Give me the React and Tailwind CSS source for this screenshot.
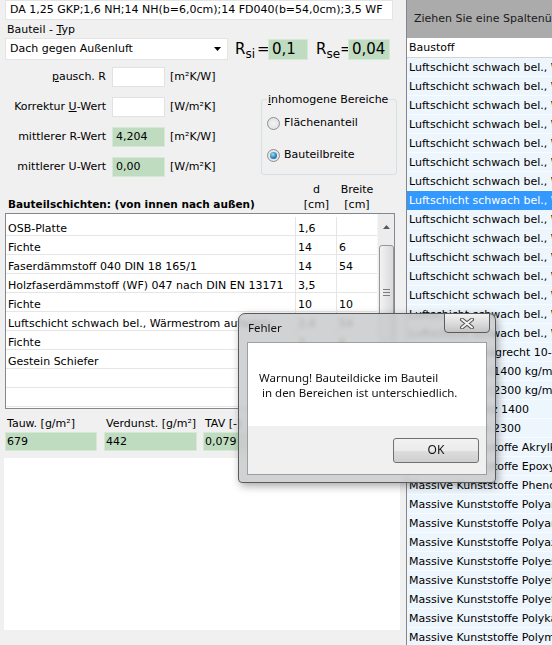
import React from "react";

const layers = [
  ["OSB-Platte", "1,6", ""],
  ["Fichte", "14", "6"],
  ["Faserdämmstoff 040 DIN 18 165/1", "14", "54"],
  ["Holzfaserdämmstoff (WF) 047 nach DIN EN 13171", "3,5", ""],
  ["Fichte", "10", "10"],
  ["Luftschicht schwach bel., Wärmestrom aufwärts", "2,4", "54"],
  ["Fichte", "3", "6"],
  ["Gestein Schiefer", "1", ""],
  ["", "", ""],
  ["", "", ""],
];

const materials = [
  "Luftschicht schwach bel., Wärmestrom abwärts 5 mm",
  "Luftschicht schwach bel., Wärmestrom abwärts 7 mm",
  "Luftschicht schwach bel., Wärmestrom abwärts 10 mm",
  "Luftschicht schwach bel., Wärmestrom abwärts 15 mm",
  "Luftschicht schwach bel., Wärmestrom abwärts 25 mm",
  "Luftschicht schwach bel., Wärmestrom abwärts 50 mm",
  "Luftschicht schwach bel., Wärmestrom abwärts 100 mm",
  "Luftschicht schwach bel., Wärmestrom aufwärts 5 mm",
  "Luftschicht schwach bel., Wärmestrom aufwärts 7 mm",
  "Luftschicht schwach bel., Wärmestrom aufwärts 10 mm",
  "Luftschicht schwach bel., Wärmestrom aufwärts 15 mm",
  "Luftschicht schwach bel., Wärmestrom aufwärts 25 mm",
  "Luftschicht schwach bel., Wärmestrom aufwärts 50 mm",
  "Luftschicht schwach bel., Wärmestrom horizontal",
  "Luftschicht schwach bel., Wärmestrom horizontal",
  "Luftschicht waagrecht 10-15 mm",
  "Kalksandstein (1400 kg/m³)",
  "Kalksandstein (2300 kg/m³)",
  "Kalkzementputz 1400",
  "Zementestrich 2300",
  "Massive Kunststoffe Akrylkunststoff",
  "Massive Kunststoffe Epoxydharze",
  "Massive Kunststoffe Phenolharze",
  "Massive Kunststoffe Polyamid",
  "Massive Kunststoffe Polyamid 6.6",
  "Massive Kunststoffe Polyazetatharz",
  "Massive Kunststoffe Polyester",
  "Massive Kunststoffe Polyethylen hoher Dichte",
  "Massive Kunststoffe Polyethylen niedriger Dichte",
  "Massive Kunststoffe Polykarbonat",
  "Massive Kunststoffe Polymethylmethacrylat",
];

function Radio({ checked }) {
  return (
    <span className="w-[13px] h-[13px] rounded-full border border-[#8e8f8f] bg-[radial-gradient(circle_at_50%_50%,#f4f4f4,#dcdcdc)] flex items-center justify-center shrink-0">
      {checked && (
        <span className="w-[7px] h-[7px] rounded-full bg-[radial-gradient(circle_at_40%_35%,#9fdcf8,#2a86bd_55%,#0f4d77)]" />
      )}
    </span>
  );
}

function ValueRow({ label, value, unit, green }) {
  return (
    <div className="flex items-center h-[20px]">
      <span className="w-[101px] text-right whitespace-nowrap">{label}</span>
      <div
        className={
          green
            ? "ml-[6px] w-[53px] h-[20px] bg-[#c0dcc0] border border-[#d6e8d6] pl-[3px] leading-[18px]"
            : "ml-[6px] w-[53px] h-[20px] bg-white border border-[#e2e2e2] pl-[3px] leading-[18px]"
        }
      >
        {value}
      </div>
      <span className="ml-[5px]">{unit}</span>
    </div>
  );
}

function LeftPanel() {
  return (
    <div className="w-[406px] shrink-0 flex flex-col pl-[5px]">
      <div className="w-[388px] h-[20px] bg-white border border-[#e4e4e4] pl-[4px] leading-[18px] whitespace-nowrap overflow-hidden">
        DA 1,25 GKP;1,6 NH;14 NH(b=6,0cm);14 FD040(b=54,0cm);3,5 WF
      </div>
      <div className="mt-[3px] leading-[14px] pl-[2px]">
        Bauteil - <u>T</u>yp
      </div>
      <div className="mt-[1px] flex items-center h-[22px]">
        <div className="w-[223px] h-[22px] bg-white border border-[#e4e4e4] flex items-center justify-between pl-[4px] pr-[6px]">
          <span>Dach gegen Außenluft</span>
          <svg width="7" height="4" viewBox="0 0 7 4">
            <path d="M0 0 L7 0 L3.5 4 Z" fill="#000" />
          </svg>
        </div>
        <div className="ml-[7px] w-[33px] flex items-baseline whitespace-nowrap">
          <span className="text-[15px]">R</span>
          <span className="text-[12px] relative top-[4px]">si</span>
          <span className="text-[15px] ml-[2px]">=</span>
        </div>
        <div className="w-[40px] h-[21px] bg-[#c0dcc0] border border-[#d6e8d6] pl-[3px] text-[15px] leading-[19px]">0,1</div>
        <div className="ml-[8px] w-[32px] flex items-baseline whitespace-nowrap">
          <span className="text-[15px]">R</span>
          <span className="text-[12px] relative top-[4px]">se</span>
          <span className="text-[15px]">=</span>
        </div>
        <div className="w-[42px] h-[21px] bg-[#c0dcc0] border border-[#d6e8d6] pl-[3px] text-[15px] leading-[19px]">0,04</div>
      </div>

      <div className="flex mt-[7px]">
        <div className="flex flex-col gap-[10px] w-[255px]">
          <ValueRow label={<><u>p</u>ausch. R</>} value="" unit="[m²K/W]" />
          <ValueRow label={<>Korrektur <u>U</u>-Wert</>} value="" unit="[W/m²K]" />
          <ValueRow label="mittlerer R-Wert" value="4,204" unit="[m²K/W]" green />
          <ValueRow label="mittlerer U-Wert" value="0,00" unit="[W/m²K]" green />
        </div>
        <fieldset className="ml-[1px] mt-[26px] w-[136px] h-[82px] border border-[#d5dfe5] rounded-[3px] px-[5px]">
          <legend className="px-[1px] leading-[13px]">
            <u>i</u>nhomogene Bereiche
          </legend>
          <div className="mt-[10px] h-[14px] flex items-center gap-[4px]">
            <Radio />
            <span>Flächenanteil</span>
          </div>
          <div className="mt-[18px] h-[14px] flex items-center gap-[4px]">
            <Radio checked />
            <span>Bauteilbreite</span>
          </div>
        </fieldset>
      </div>

      <div className="mt-[5px] h-[30px] flex items-end">
        <div className="w-[291px] pl-[3px] font-bold text-[10.5px] leading-[15px]">
          Bauteilschichten: (von innen nach außen)
        </div>
        <div className="w-[41px] text-center leading-[15px]">
          d<br />[cm]
        </div>
        <div className="w-[40px] text-center leading-[15px]">
          Breite<br />[cm]
        </div>
      </div>

      <div className="mt-[1px] w-[390px] h-[196px] border border-[#828790] bg-white flex overflow-hidden">
        <div className="w-[371px] pt-[3px]">
          {layers.map((l, i) => (
            <div key={i} className="h-[19px] flex border-b border-[#e6e6e6] leading-[23px] whitespace-nowrap">
              <div className="w-[290px] h-[18px] pl-[2px] border-r border-[#e6e6e6] overflow-hidden">{l[0]}</div>
              <div className="w-[41px] h-[18px] pl-[2px] border-r border-[#e6e6e6]">{l[1]}</div>
              <div className="w-[40px] h-[18px] pl-[2px]">{l[2]}</div>
            </div>
          ))}
        </div>
        <div className="w-[17px] bg-[#ececec] border-l border-[#f6f6f6] flex flex-col items-center">
          <div className="h-[26px] flex items-center justify-center">
            <svg width="7" height="4" viewBox="0 0 7 4">
              <path d="M0 4 L3.5 0 L7 4 Z" fill="#5a5a5a" />
            </svg>
          </div>
          <div className="mt-[5px] w-[15px] h-[95px] rounded-[3px] border border-[#979797] bg-gradient-to-r from-[#f3f3f3] to-[#d9d9d9] flex flex-col items-center justify-center gap-[2px]">
            <span className="w-[7px] h-px bg-[#7d7d7d]" />
            <span className="w-[7px] h-px bg-[#7d7d7d]" />
            <span className="w-[7px] h-px bg-[#7d7d7d]" />
          </div>
          <div className="mt-auto h-[17px] flex items-center justify-center">
            <svg width="7" height="4" viewBox="0 0 7 4">
              <path d="M0 0 L7 0 L3.5 4 Z" fill="#5a5a5a" />
            </svg>
          </div>
        </div>
      </div>

      <div className="mt-[7px] flex">
        {[
          ["Tauw. [g/m²]", "679", "w-[92px]"],
          ["Verdunst. [g/m²]", "442", "w-[93px] ml-[7px]"],
          ["TAV [-]", "0,079", "w-[93px] ml-[6px]"],
        ].map(([label, value, cls]) => (
          <div key={label} className={cls}>
            <div className="leading-[16px] pl-[2px] whitespace-nowrap">{label}</div>
            <div className="h-[19px] bg-[#c0dcc0] border border-[#d6e8d6] pl-[1px] leading-[18px]">{value}</div>
          </div>
        ))}
      </div>

      <div className="mt-[7px] -ml-[1px] w-[396px] h-[172px] bg-white" />
    </div>
  );
}

function MaterialList() {
  return (
    <div className="flex-1 min-w-0 border-l border-[#828790] flex flex-col overflow-hidden">
      <div className="h-[38px] shrink-0 bg-[#ababab] flex items-center pl-[7px] whitespace-nowrap text-[#1a1a1a]">
        Ziehen Sie eine Spaltenüberschrift hierher, um nach dieser Spalte zu gruppieren
      </div>
      <div className="h-[20px] shrink-0 bg-white border-b border-[#d5d5d5] pl-[2px] leading-[20px]">Baustoff</div>
      {materials.map((m, i) => (
        <div
          key={i}
          className={
            i === 7
              ? "h-[19px] shrink-0 leading-[20px] pl-[2px] whitespace-nowrap bg-[#3399ff] text-white"
              : "h-[19px] shrink-0 leading-[19px] pl-[2px] whitespace-nowrap bg-[#eef6fd] border-b border-[#f8fbff]"
          }
        >
          {m}
        </div>
      ))}
    </div>
  );
}

function ErrorDialog() {
  return (
    <div className="absolute left-[238px] top-[313px] w-[258px] h-[170px] rounded-t-[7px] rounded-b-[4px] border border-[#5a5a5a] bg-[#c9cacb]/85 backdrop-blur-[2px] shadow-[2px_3px_8px_rgba(0,0,0,0.35)] flex flex-col font-['Noto_Sans',sans-serif] text-[11.5px]">
      <div className="h-[28px] shrink-0 flex items-center pl-[9px] text-[#111]">Fehler</div>
      <div className="absolute left-[205px] -top-px w-[46px] h-[20px] rounded-b-[4px] border border-[#5c5c5c] bg-gradient-to-b from-[#f2f2f2] via-[#dcdcdc] to-[#c3c3c3] flex items-center justify-center">
        <svg width="14" height="11" viewBox="0 0 14 11">
          <path d="M2 1.5 L12 9.5 M12 1.5 L2 9.5" stroke="#555" strokeWidth="4" strokeLinecap="round" />
          <path d="M2 1.5 L12 9.5 M12 1.5 L2 9.5" stroke="#f4f4f4" strokeWidth="2" strokeLinecap="round" />
        </svg>
      </div>
      <div className="mx-[8px] h-[133px] shrink-0 border border-[#8a8a8a]/70 flex flex-col">
        <div className="h-[83px] bg-white pl-[11px] pt-[27px] leading-[15px] whitespace-pre text-[#111]">
          {"Warnung! Bauteildicke im Bauteil\n in den Bereichen ist unterschiedlich."}
        </div>
        <div className="flex-1 bg-[#f0f0f0] flex items-center justify-end pr-[7px]">
          <div className="w-[86px] h-[25px] rounded-[3px] border border-[#707070] bg-[linear-gradient(#f2f2f2_0%,#ebebeb_50%,#dddddd_51%,#cfcfcf_100%)] flex items-center justify-center text-[#111] text-[12px]">
            OK
          </div>
        </div>
      </div>
    </div>
  );
}

export default function App() {
  return (
    <div className="relative flex w-[552px] h-[645px] overflow-hidden bg-[#f0f0f0] text-[11px] text-black font-['DejaVu_Sans',sans-serif]">
      <LeftPanel />
      <MaterialList />
      <ErrorDialog />
    </div>
  );
}
